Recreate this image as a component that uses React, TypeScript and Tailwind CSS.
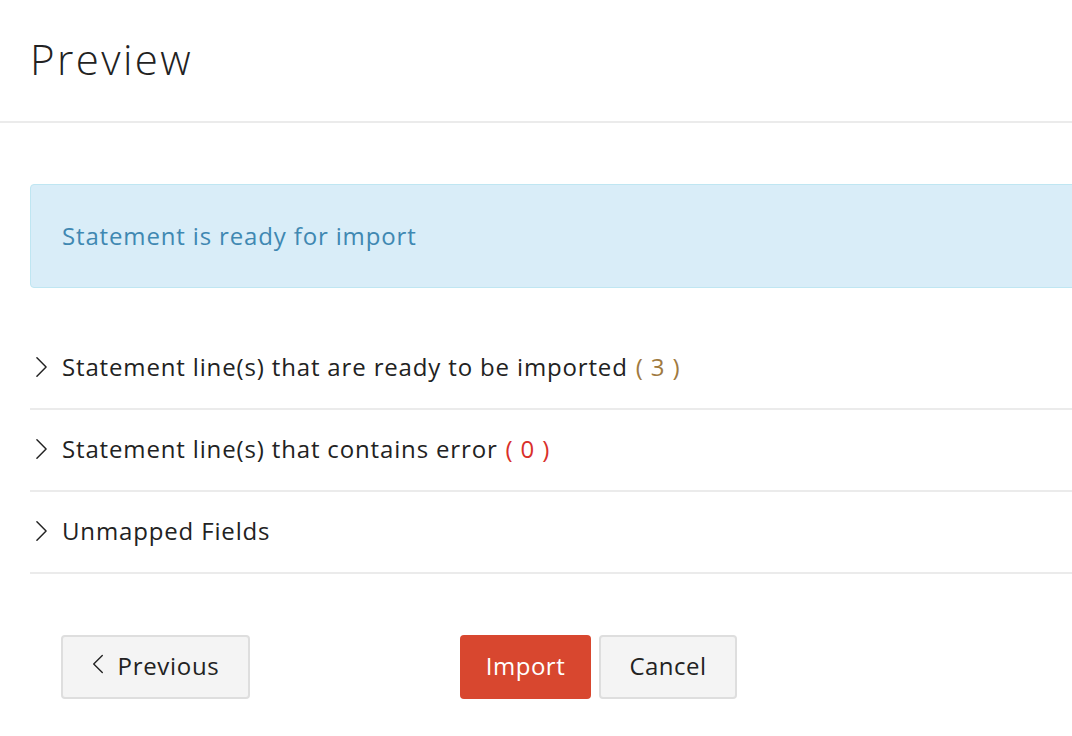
import React from "react";

function Chevron({ dir = "right", className = "" }: { dir?: "right" | "left"; className?: string }) {
  return (
    <svg viewBox="0 0 14 24" className={className} fill="none" stroke="currentColor" strokeWidth="1.6" strokeLinecap="round" strokeLinejoin="round">
      {dir === "right" ? <path d="M2 2l10 10L2 22" /> : <path d="M12 2L2 12l10 10" />}
    </svg>
  );
}

const ROWS: { label: string; count?: string; color?: string }[] = [
  { label: "Statement line(s) that are ready to be imported", count: "( 3 )", color: "text-[#a07a3f]" },
  { label: "Statement line(s) that contains error", count: "( 0 )", color: "text-[#d9302a]" },
  { label: "Unmapped Fields" },
];

export default function App() {
  return (
    <div className="w-[1072px] h-[736px] overflow-hidden bg-white text-[#222] font-['Open_Sans','Noto_Sans',sans-serif]">
      <div className="h-[123px] border-b-2 border-[#ebebeb] pl-[30px] pt-[30px]">
        <h1 className="text-[42px] font-light leading-[58px] tracking-[2.4px] text-[#222]">Preview</h1>
      </div>

      <div className="pl-[30px]">
        <div className="mt-[61px] w-[1100px] h-[104px] rounded-l-[4px] border border-[#bfe6f2] bg-[#d9edf8] flex items-center pl-[31px]">
          <span className="text-[24px] tracking-[0.85px] text-[#3f88b2]">Statement is ready for import</span>
        </div>

        <div className="mt-[40px]">
          {ROWS.map((r) => (
            <div key={r.label} className="h-[82px] border-b-2 border-[#ebebeb] flex items-center pb-[2px]">
              <Chevron className="w-[13px] h-[22px] ml-[5px] mr-[14px] text-[#222]" />
              <span className="text-[24px] tracking-[0.85px] text-[#222]">
                {r.label}
                {r.count && <span className={`ml-[8px] ${r.color}`}>{r.count}</span>}
              </span>
            </div>
          ))}
        </div>

        <div className="mt-[61px] flex items-center pl-[31px]">
          <button className="w-[189px] h-[64px] rounded-[4px] border-2 border-[#dedede] bg-[#f4f4f4] flex items-center justify-center pb-[3px] text-[24px] tracking-[0.7px] text-[#222]">
            <Chevron dir="left" className="w-[12px] h-[22px] mr-[14px] mb-[4px]" />
            Previous
          </button>
          <button className="ml-[210px] w-[131px] h-[64px] rounded-[4px] bg-[#d8472f] pb-[3px] text-white text-[24px] tracking-[0.5px]">Import</button>
          <button className="ml-[8px] w-[138px] h-[64px] rounded-[4px] border-2 border-[#dedede] bg-[#f4f4f4] pb-[3px] text-[24px] tracking-[0.5px] text-[#222]">Cancel</button>
        </div>
      </div>
    </div>
  );
}
